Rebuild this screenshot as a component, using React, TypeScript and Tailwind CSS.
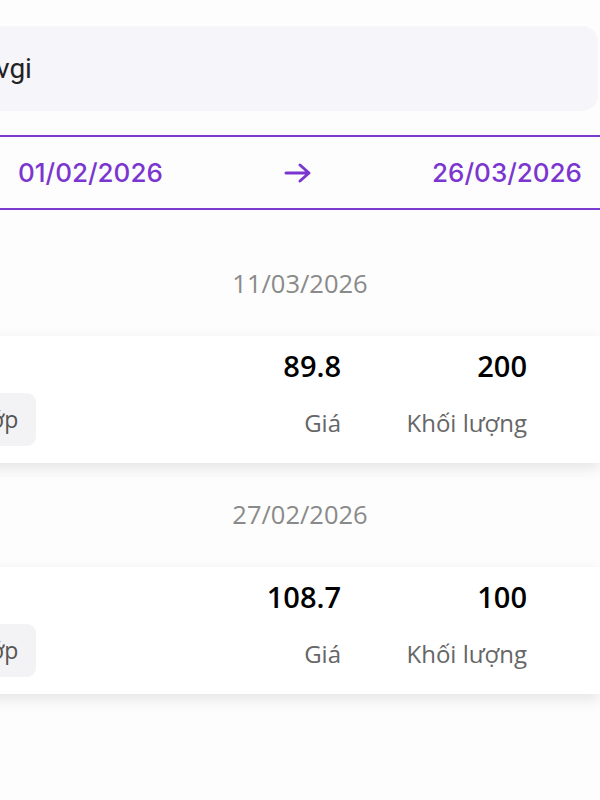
import React from "react";

const purple = "text-[#7b36cf]";

function Card({ price, qty }: { price: string; qty: string }) {
  return (
    <div className="h-[127px] w-[640px] -ml-[40px] bg-white shadow-[0_5px_14px_rgba(0,0,0,0.1)] flex items-stretch">
      <div className="flex items-end pb-[17px] flex-1">
        <div className="h-[53px] rounded-[9px] bg-[#f3f3f6] flex items-center pl-[10px] pr-[18px] -ml-[6px] text-[23px] text-[#555] font-['Open_Sans',sans-serif]">
          khớp
        </div>
      </div>
      <div className="flex flex-col items-end w-[140px] font-['Open_Sans',sans-serif]">
        <div className="h-[60px] pt-[10px] text-[29px] font-semibold text-black leading-[40px]">{price}</div>
        <div className="pt-[10px] text-[24px] text-[#666] leading-[34px]">Giá</div>
      </div>
      <div className="flex flex-col items-end w-[186px] mr-[73px] font-['Open_Sans',sans-serif]">
        <div className="h-[60px] pt-[10px] text-[29px] font-semibold text-black leading-[40px]">{qty}</div>
        <div className="pt-[10px] text-[24px] text-[#666] leading-[34px]">Khối lượng</div>
      </div>
    </div>
  );
}

function DateHeader({ d }: { d: string }) {
  return (
    <div className="h-[104px] flex items-center justify-center text-[25.5px] text-[#8a8a8a] font-['Open_Sans',sans-serif] pb-[2px]">
      {d}
    </div>
  );
}

export default function App() {
  return (
    <div className="w-[600px] h-[800px] bg-[#fdfdfd] overflow-hidden">
      <div className="pt-[26px] pr-[2px]">
        <div className="h-[85px] -ml-[20px] rounded-[16px] bg-[#f5f5fa] flex items-center pl-[16px] text-[28px] text-[#222] font-['Roboto',sans-serif]">
          vgi
        </div>
      </div>
      <div className="mt-[24px] h-[75px] border-y-2 border-[#7b3bd0] flex items-center justify-between pl-[18px] pr-[18px] font-['Inter',sans-serif] font-medium text-[26px]">
        <span className={purple}>01/02/2026</span>
        <svg width="28" height="22" viewBox="0 0 28 22" className="ml-[2px]">
          <path d="M2 11H25M16 3L25 11L16 19" fill="none" stroke="#7b36cf" strokeWidth="3" strokeLinecap="round" strokeLinejoin="round" />
        </svg>
        <span className={purple}>26/03/2026</span>
      </div>
      <div className="pt-[22px]">
        <DateHeader d="11/03/2026" />
        <Card price="89.8" qty="200" />
        <DateHeader d="27/02/2026" />
        <Card price="108.7" qty="100" />
      </div>
    </div>
  );
}
